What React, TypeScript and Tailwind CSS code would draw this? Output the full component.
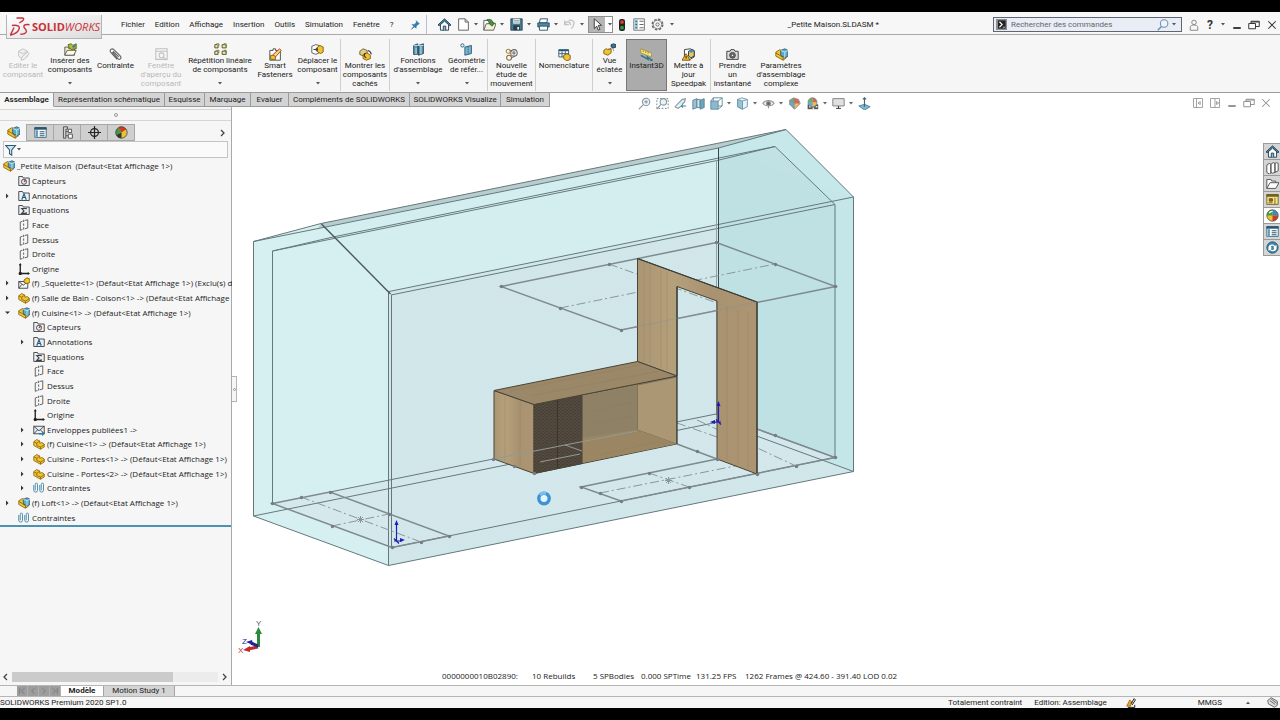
import React from "react";

const Y = "#f2c230";
const K = "#3d4246";

/* 16 x 16 glyphs used by the toolbars and the feature tree */
const glyphs: Record<string, React.ReactNode> = {
  part: (
    <g stroke="#7d5d08" strokeWidth="1">
      <path d="M1 5l4-3 4 2v3l3-1 3 2v4l-5 3-9-5z" fill={Y} />
      <path d="M1 5l4 2v3l5 2 5-3M10 12v3M5 7l4-3" fill="none" />
    </g>
  ),
  asm: (
    <g strokeWidth="1">
      <path d="M1 5l5-3 2 1v6l6 3-4 3-9-5z" fill={Y} stroke="#7d5d08" />
      <path d="M7 3l5-2 4 2v7l-4 2-5-3z" fill="#5ba9c9" stroke="#23526a" />
      <path d="M7 3l5 2 4-2M12 5v7" fill="none" stroke="#d8eef6" />
      <path d="M1 6l5 3 4 3v3" fill="none" stroke="#7d5d08" />
    </g>
  ),
  capteurs: (
    <g fill="none" stroke={K} strokeWidth="1.2">
      <path d="M1 14V2h5l1 2h8v10z" fill="#eceeef" />
      <circle cx="8" cy="9" r="3.4" />
      <path d="M8 9l2-2" stroke="#c22" strokeWidth="2" />
    </g>
  ),
  annot: (
    <g fill="none" stroke={K} strokeWidth="1.2">
      <path d="M1 14V2h5l1 2h8v10z" fill="#eceeef" />
      <path d="M5 13l3-8 3 8M6 10h4" stroke="#1d5f8a" strokeWidth="1.5" />
    </g>
  ),
  equa: (
    <g fill="none" stroke={K} strokeWidth="1.2">
      <path d="M1 14V2h5l1 2h8v10z" fill="#eceeef" />
      <path d="M11 7V6H5l3 3.200L5 12.500h6v-1.500" strokeWidth="1.500" />
    </g>
  ),
  plane: (
    <g fill="none" stroke="#555" strokeWidth="1.2">
      <path d="M6 3L3 4v11l3-1M9 2l4-1v11l-4 1" />
      <path d="M7.500 1v15" strokeDasharray="3 2" />
    </g>
  ),
  origin: (
    <g stroke="#222" strokeWidth="1.8" fill="#222">
      <path d="M3 2v12h11" fill="none" />
      <path d="M3 0l2 3H1zM16 14l-3-2v4z" strokeWidth="0" />
      <circle cx="3" cy="14" r="1.300" />
    </g>
  ),
  squel: (
    <g stroke={K} strokeWidth="1.2" fill="#f4f4f4">
      <path d="M1 6h12v9H1z" />
      <path d="M1 6l6 5 6-5M1 15l4-5" fill="none" />
      <path d="M8 4l4-3 4 2v4l-4 2-4-2z" fill={Y} stroke="#7d5d08" />
    </g>
  ),
  env: (
    <g stroke={K} strokeWidth="1.2" fill="#e8eef2">
      <path d="M1 3h14v10H1z" />
      <path d="M1 3l7 6 7-6M1 13l5-5M15 13l-5-5" fill="none" />
      <path d="M8 12h4v-2l4 3-4 3v-2H8z" fill="#2f7ea8" stroke="none" />
    </g>
  ),
  mates: (
    <g fill="none" stroke="#4f8eae" strokeWidth="1.3">
      <path d="M1 4v7a2.500 2.500 0 0 0 5 0V3a1.500 1.500 0 0 0-3 0v8M9 4v7a2.500 2.500 0 0 0 5 0V3a1.500 1.500 0 0 0-3 0v8" />
    </g>
  ),
  list: (
    <g stroke="#2b5873" strokeWidth="1">
      <path d="M1 2h14v12H1z" fill="#fff" />
      <path d="M1 2h14v2H1z" fill="#2b5873" />
      <path d="M2 5h3v9H2z" fill="#77b2cf" stroke="none" />
      <path d="M3 7h1M3 9.500h1M3 12h1M7 7h6M7 9.500h6M7 12h6" strokeWidth="1.300" />
    </g>
  ),
  props: (
    <g fill="none" strokeWidth="1.200">
      <path d="M1 1h13v14H1z" fill="#fff" stroke="#777" />
      <path d="M2 2h4v12H2z" fill="#9cc3d6" stroke="none" />
      <path d="M3 4h2M3 8h2M3 12h2" stroke="#2b5873" />
      <path d="M8 4h5M8 8h5M8 12h5" stroke="#666" />
    </g>
  ),
  config: (
    <g fill="none" stroke="#555" strokeWidth="1.2">
      <path d="M3 1h5v3H6v11H3zM6 7h3M6 12h3" />
      <path d="M9 4h4v4H9zM9 10h5v5H9z" fill="#fff" />
    </g>
  ),
  target: (
    <g fill="none" stroke="#222" strokeWidth="1.500">
      <circle cx="8" cy="8" r="4.800" />
      <path d="M8 0v16M0 8h16" />
    </g>
  ),
  ball: (
    <g>
      <circle cx="8" cy="8" r="7" fill="#e8c52f" />
      <path d="M8 8V1a7 7 0 0 1 7 7z" fill="#2f8fd0" />
      <path d="M8 8V1a7 7 0 0 0-7 7z" fill="#3f9e48" />
      <path d="M8 8h7a7 7 0 0 1-7 7z" fill="#cf3b2b" />
      <circle cx="8" cy="8" r="7" fill="none" stroke="#555" strokeWidth="1" />
      <path d="M4 5a5 5 0 0 1 4-2" stroke="#fff" fill="none" strokeWidth="1.500" />
    </g>
  ),
  manager: (
    <g>
      <circle cx="8" cy="8" r="7" fill="#e8c52f" />
      <path d="M8 8L4 2a7 7 0 0 0-2.500 9z" fill="#3f9e48" />
      <path d="M8 8L4 2a7 7 0 0 1 10 2z" fill="#cf3b2b" />
      <path d="M8 8l-6.500 3A7 7 0 0 0 8 15z" fill="#333" />
      <circle cx="8" cy="8" r="7" fill="none" stroke="#444" strokeWidth="1" />
    </g>
  ),
  appearance: (
    <g>
      <path d="M7 1l6 2 2 5-7 7-6-6V4z" fill="#d0574a" />
      <path d="M8 8l7 0-7 7z" fill="#e5ba4a" />
      <path d="M8 8L2 4v5l6 6z" fill="#58a0c0" />
      <path d="M8 8L2 4l5-3z" fill="#58a565" />
      <path d="M7 1l6 2 2 5-7 7-6-6V4z" fill="none" stroke="#888" />
    </g>
  ),
  scene: (
    <g>
      <path d="M2 9h13v6H2z" fill="#444" />
      <path d="M4 11h2v2H4zM8 13h2v2H8zM12 11h2v2h-2z" fill="#eee" />
      <circle cx="8" cy="6.500" r="5.500" fill="#e5ba4a" />
      <path d="M8 6.500V1a5.500 5.500 0 0 1 5.500 5.500z" fill="#d0574a" />
      <path d="M8 6.500V1a5.500 5.500 0 0 0-5.500 5.500z" fill="#58a565" />
      <path d="M8 6.500H2.500A5.500 5.500 0 0 0 8 12z" fill="#4ea6bb" />
      <circle cx="8" cy="6.500" r="5.500" fill="none" stroke="#777" />
    </g>
  ),
  funnel: (
    <path d="M1 2h13L9 8v7l-3-2V8z" fill="#cfe3ee" stroke="#2b5873" strokeWidth="1.400" />
  ),
  home: (
    <g stroke="#2a4756" strokeWidth="1.200">
      <path d="M3 8v7h10V8L8 3z" fill="#fff" />
      <path d="M0 8.500L8 1l8 7.500-1.500 1L8 3.800 1.500 9.500z" fill="#4a8aa6" />
      <path d="M6.500 15v-5h3v5" fill="#8fb9cb" />
    </g>
  ),
  doc: (
    <path d="M2 1h8l4 4v10H2zM10 1v4h4" fill="#fff" stroke="#666" strokeWidth="1.200" />
  ),
  open: (
    <g stroke="#555" strokeWidth="1.100">
      <path d="M1 15V3h5l1 2h5v3" fill="#fff" />
      <path d="M1 15L4 7h12l-3 8z" fill="#f5f1da" />
      <path d="M5 2c5-1 7 1 7 4h2l-3 4-4-4h2c0-2-1-3-4-3z" fill="#4f9a3e" stroke="#2c6522" />
    </g>
  ),
  save: (
    <g>
      <path d="M1 1h14v14H1z" fill="#49798f" stroke="#233e4c" />
      <path d="M4 1h8v6H4z" fill="#e6eef2" />
      <path d="M4 9h8v6H4z" fill="#24404e" />
      <path d="M5 3h6M5 5h6" stroke="#899" />
      <path d="M9 11h2v3H9z" fill="#fff" />
    </g>
  ),
  print: (
    <g stroke="#274b5e" strokeWidth="1.100">
      <path d="M4 1h9l-1 5H3z" fill="#fff" />
      <path d="M1 6h14v5H1z" fill="#4d8ba8" />
      <path d="M3 10h10v5H3z" fill="#fff" />
    </g>
  ),
  undo: (
    <path d="M2 3v5h5M2 7c3-4 8-3 7 2M7 3c4-1 8 1 6 5 0 2-1 4-3 5" fill="none" stroke="#c3c3c3" strokeWidth="1.600" />
  ),
  cursor: (
    <path d="M4 1v12l3-3 2 5 2-1-2-5h4z" fill="#fff" stroke="#333" strokeWidth="1.100" />
  ),
  light: (
    <g>
      <rect x="4" y="0" width="8" height="16" rx="3" fill="#222" />
      <circle cx="8" cy="4" r="2.500" fill="#e23a2e" />
      <circle cx="8" cy="11.500" r="2.500" fill="#2f9a3d" />
    </g>
  ),
  gear: (
    <g fill="none" stroke="#666">
      <circle cx="8" cy="8" r="6.500" strokeWidth="1.600" strokeDasharray="3.100 2" />
      <circle cx="8" cy="8" r="5.200" strokeWidth="1" />
      <circle cx="8" cy="8" r="2" strokeWidth="1.100" />
    </g>
  ),
  pin: (
    <path d="M10 1l5 5-2 1-3 3v3l-3-2-5 4 4-5-3-3h4l3-3z" fill="#2f7fb0" stroke="#1f5d85" strokeWidth=".600" />
  ),
  edit: (
    <g fill="#f0f0f0" stroke="#c4c4c4" strokeWidth="1.200">
      <path d="M2 4l5-3 6 3v6l-6 4-5-4z" />
      <path d="M6 11l7-6 2 2-6 7-4 1zM2 4l5 3 6-3" />
    </g>
  ),
  insert: (
    <g strokeWidth="1.100">
      <path d="M1 15V5h4l1 2h7v8z" fill="#f3eec4" stroke="#555" />
      <path d="M1 15l3-6h11l-3 6z" fill="#fffbe0" stroke="#555" />
      <path d="M5 2l4-1 2 2 4-2v6l-6 1-3-3z" fill="#b3bf2c" stroke="#55600f" />
      <path d="M10 4l4-2v3l-3 1z" fill="#3e7fa5" />
    </g>
  ),
  clip: (
    <path d="M4 5l7 8c2 2 5 0 3-3L6 2C4 0 0 2 2 5l8 9M5 4l7 7" fill="none" stroke="#666" strokeWidth="1.400" />
  ),
  preview: (
    <g fill="none" stroke="#c0c0c0" strokeWidth="1.300">
      <path d="M1 1h14v13H1zM1 4h14" />
      <circle cx="8" cy="9" r="3" />
      <path d="M10 11l4 4" />
    </g>
  ),
  pattern: (
    <g stroke="#54481d" strokeWidth="1.100">
      <path d="M1 2h3l1 1v3H1zM10 2h3l2 1v3h-5zM1 10h3l1 1v3H1zM10 10h3l2 1v3h-5z" fill="#f3e6a8" />
      <path d="M3 1h3v3M12 1h3v3M3 9h3v3M12 9h3v3" fill="none" stroke="#4c7f2e" />
    </g>
  ),
  smart: (
    <g strokeWidth="1.100">
      <path d="M1 3h4V1h3v2h6v12H1z" fill="#fff" stroke="#444" />
      <path d="M2 9h6v5H2z" fill={Y} stroke="#7d5d08" />
      <path d="M5 8l8-7 2 2-7 8z" fill="#f6d86d" stroke="#a33" />
    </g>
  ),
  move: (
    <g strokeWidth="1.100">
      <path d="M1 4l5-2 4 1v9l-4 2-5-2z" fill="#fff" stroke="#555" />
      <path d="M8 5l3-2 4 2v6l-3 2-4-2z" fill={Y} stroke="#7d5d08" />
      <path d="M3 8h5M6 6l2 2-2 2" stroke="#444" fill="none" strokeWidth="1.300" />
    </g>
  ),
  show: (
    <g strokeWidth="1.100">
      <path d="M1 4l4-3 5 2v5l-4 2-5-2z" fill="#e2cf8c" stroke="#6b5a22" />
      <path d="M5 8l5-2 4 3v4l-5 2-4-2z" fill={Y} stroke="#7d5d08" />
      <path d="M11 3c3 1 4 3 4 5M8 6c-2 2-2 5 1 6" fill="none" stroke="#333" strokeWidth="1.300" />
    </g>
  ),
  features: (
    <g strokeWidth="1.100">
      <path d="M2 3l5-2v13H2zM8 3l6-2v12l-6 2z" fill="#5a93b0" stroke="#24475a" />
      <path d="M2 3h12M5 6v8M11 4v10" stroke="#cfe5ee" fill="none" />
    </g>
  ),
  geom: (
    <g strokeWidth="1.200">
      <path d="M6 5l8-2v10l-8 2z" fill="#7fb6cf" stroke="#2b6280" />
      <circle cx="3" cy="3" r="2" fill="none" stroke="#2b6280" />
      <path d="M10 4v10" stroke="#2b6280" strokeDasharray="2 1" />
    </g>
  ),
  study: (
    <g fill="none" strokeWidth="1.300">
      <circle cx="11" cy="6" r="4" stroke="#666" />
      <circle cx="11" cy="6" r="1.300" stroke="#666" />
      <circle cx="4" cy="4" r="2.500" stroke="#a58a3a" />
      <circle cx="5" cy="12" r="3" stroke="#8a6b3a" />
      <path d="M6 3l3 1M8 12l4-2" stroke="#666" />
    </g>
  ),
  bom: (
    <g strokeWidth="1.100">
      <path d="M1 2h12v9H1z" fill="#fff" stroke="#2b5873" />
      <path d="M1 2h12v2H1z" fill="#2b5873" />
      <path d="M1 7h12M5 4v7M9 4v7" stroke="#2b5873" fill="none" />
      <path d="M7 9l4-2 4 2v5l-4 2-4-3z" fill={Y} stroke="#7d5d08" />
    </g>
  ),
  explode: (
    <g strokeWidth="1.100">
      <path d="M1 9l3-2 2 1 4-1v5l-4 3-5-2z" fill={Y} stroke="#7d5d08" />
      <path d="M10 2l3-1 3 1v3l-3 1-3-1z" fill="#3e6f8c" stroke="#1f4054" />
      <path d="M7 7h6v3" stroke="#666" fill="none" strokeDasharray="1 1" />
    </g>
  ),
  instant: (
    <g>
      <path d="M1 1l13 5v5L1 6z" fill="#f7e58a" stroke="#a8902a" />
      <path d="M4 3v2M7 4v2M10 5v2" stroke="#806c1a" />
      <path d="M1 9l9 5-1-3 6 4-3 1" fill="none" stroke="#2b6f9a" strokeWidth="1.600" />
    </g>
  ),
  speedpak: (
    <g strokeWidth="1.100">
      <path d="M3 2l7-1 5 2v8l-5 3-7-2z" fill="#fff" stroke="#333" />
      <path d="M8 4l4-2 3 2v6l-4 2-3-2z" fill="#e9c95a" stroke="#234" />
      <path d="M8 4l4-2 3 2-4 2z" fill="#4f93b8" />
      <path d="M5 7l5 8H0z" fill={Y} stroke="#7d4d08" />
      <path d="M5 10v3" stroke="#000" />
    </g>
  ),
  camera: (
    <g stroke="#444" strokeWidth="1.200" fill="#ddd">
      <path d="M1 4h4l1-2h4l1 2h4v10H1z" />
      <circle cx="8" cy="9" r="3.500" fill="#777" />
      <circle cx="8" cy="9" r="1.500" fill="#fff" />
    </g>
  ),
  zoomfit: (
    <g fill="none" stroke="#7c8b93" strokeWidth="1.300">
      <circle cx="10" cy="6" r="4.500" fill="#e6f1f6" />
      <path d="M7 9l-6 6M8 6h4M10 4v4" />
    </g>
  ),
  zoomarea: (
    <g fill="none" stroke="#7c8b93" strokeWidth="1.300">
      <path d="M1 2h14v12H1z" strokeDasharray="2 2" />
      <circle cx="9" cy="6" r="4" fill="#e6f1f6" />
      <path d="M6 9l-5 6" />
    </g>
  ),
  prev: (
    <g fill="none" stroke="#6f8894" strokeWidth="1.300">
      <path d="M1 12l9-9 4-1-1 4-3 3M1 12l4 2 4-3" fill="#dcebf1" />
      <path d="M9 11h6M11 9l-2 2 2 2" stroke="#2e7da3" />
    </g>
  ),
  section: (
    <g stroke="#3f6f88" strokeWidth="1">
      <path d="M1 4l5-2v11l-5 2z" fill="#8dbbd0" />
      <path d="M6 3h4v10H6z" fill="#cdd" />
      <path d="M10 4l5-2v11l-5 2z" fill="#5e9ab8" />
    </g>
  ),
  orient: (
    <g stroke="#4f7c92" strokeWidth="1.100">
      <path d="M4 1h11v10H4z" fill="#fff" />
      <path d="M1 5h9v10H1z" fill="#7fb3cb" />
      <path d="M1 5l3-4M10 5l5-4M10 15l5-4" fill="none" />
    </g>
  ),
  cube: (
    <g stroke="#5c8ba2" strokeWidth="1.100">
      <path d="M2 3l5-2 7 2v9l-6 3-6-3z" fill="#e6f2f7" />
      <path d="M2 3l6 2v10l-6-3z" fill="#8dbdd2" />
      <path d="M8 5l6-2" />
    </g>
  ),
  eye: (
    <g fill="none" stroke="#8a8a8a" strokeWidth="1.300">
      <path d="M1 8c3-5 11-5 14 0-3 4-11 4-14 0z" fill="#eee" />
      <circle cx="8" cy="8" r="2.500" fill="#555" />
      <path d="M8 10v4" />
    </g>
  ),
  monitor: (
    <g stroke="#777" strokeWidth="1.200" fill="#ddd">
      <path d="M1 2h14v9H1z" />
      <path d="M8 11v3M5 14h6" stroke="#222" />
    </g>
  ),
  normal: (
    <g>
      <path d="M1 11l7-2 7 3-7 4z" fill="#6fb0cc" stroke="#336f8c" />
      <path d="M8 12V1M6 3l2-2 2 2" stroke="#356" strokeWidth="1.400" fill="none" />
    </g>
  ),
  books: (
    <g fill="#fff" stroke="#555" strokeWidth="1.200">
      <path d="M1 5l3-2 2 1v11l-2 1-3-2zM6 4l3-2 2 1v11l-3 1-2-1zM11 3l2-1 2 1v9l-4 2z" />
    </g>
  ),
  folder: (
    <path d="M1 14V3h5l1 2h5v2M1 14l4-7h11l-4 7z" fill="#fff" stroke="#555" strokeWidth="1.200" />
  ),
  palette: (
    <g stroke="#6a5618" strokeWidth="1">
      <path d="M1 2h14v12H1z" fill="#f6e08c" />
      <path d="M1 2h14v2H1zM4 7h4v3H4zM11 6v8" fill="#7d6a25" />
      <path d="M3 12h5" />
    </g>
  ),
  globe: (
    <g>
      <circle cx="8" cy="8" r="7" fill="#3f82a8" stroke="#25526d" />
      <path d="M3 8c0-4 6-5 8-2l2-1v4H9l1-2c-2-2-4-1-4 1zM13 9c0 4-6 5-8 2l-2 1V8h4l-1 2c2 2 4 1 4-1z" fill="#fff" />
    </g>
  ),
  user: (
    <g fill="none" stroke="#888" strokeWidth="1.300">
      <circle cx="8" cy="4.500" r="3" />
      <path d="M3 15V11c0-4 10-4 10 0v4z" />
    </g>
  ),
  mag: (
    <g fill="none" stroke="#6d8fb0" strokeWidth="1.400">
      <circle cx="9.500" cy="6" r="5" fill="#eef4fa" />
      <path d="M6 10l-5 5" strokeWidth="2" />
    </g>
  ),
  prompt: (
    <g>
      <path d="M0 0h16v16H0z" fill="#8b8f93" />
      <path d="M3 2h11v12H3z" fill="#222" />
      <path d="M5 4l4 4-4 4" fill="none" stroke="#fff" strokeWidth="1.600" />
      <path d="M10 12h3" stroke="#fff" />
    </g>
  ),
  min: <path d="M3 12h10" stroke="currentColor" strokeWidth="2.500" />,
  restore: (
    <path d="M1 6h9v7H1zM4 6V3h11v7h-5M4 4h11" fill="none" stroke="currentColor" strokeWidth="1.300" />
  ),
  close: <path d="M3 3l10 10M13 3L3 13" stroke="currentColor" strokeWidth="1.400" />,
  paneL: (
    <path d="M2 2h12v12H2zM6 2v12M11 6L8 8l3 2z" fill="none" stroke="currentColor" strokeWidth="1.100" />
  ),
  paneR: (
    <path d="M2 2h12v12H2zM8 2v12M10 6l3 2-3 2z" fill="none" stroke="currentColor" strokeWidth="1.100" />
  ),
  unit: (
    <g>
      <path d="M1 13l5-10 4 4-3 6z" fill="#e8a524" stroke="#7a5410" />
      <path d="M8 9l5-8 2 2-5 8M3 15h11v-4" fill="none" stroke="#222" strokeWidth="1.600" />
    </g>
  ),
  tag: (
    <g fill="#ddd" stroke="#555" strokeWidth="1.200">
      <path d="M1 5l5-4 9 5v6l-4 3L2 10z" />
      <path d="M4 5l8 6M6 3l8 6" />
    </g>
  ),
};

function Icon({ name, className = "size-3" }: { name: string; className?: string }) {
  return (
    <svg viewBox="0 0 16 16" className={`shrink-0 ${className}`} aria-hidden="true">
      {glyphs[name]}
    </svg>
  );
}

function Caret() {
  return (
    <svg viewBox="0 0 4 3" className="h-[3px] w-1 shrink-0" aria-hidden="true">
      <path d="M0 0h4L2 2.500z" fill="#555" />
    </svg>
  );
}

function Logo() {
  return (
    <a
      href="#"
      aria-label="SOLIDWORKS"
      className="relative z-10 flex h-6 w-24 shrink-0 items-center self-start border border-t-0 border-[#b5b5b5] bg-linear-to-br from-white to-[#dcdcdc] pl-[3px] text-[#c8313b]"
    >
      <svg viewBox="0 0 56 54" className="h-[19px] w-5 shrink-0" fill="none" stroke="currentColor" strokeWidth="4">
        <path d="M18 3h17c5 0 4 5 0 8l-9 6" />
        <path d="M5 24c15-2 24 1 20 11-3 8-12 14-24 16l10-21" />
        <path d="M55 22c-10-2-17 0-16 6 1 5 9 8 7 14-2 5-9 7-17 7" />
      </svg>
      <span className="pl-0.5 font-['Open_Sans','Noto_Sans',sans-serif] text-[11px]">
        <b>SOLID</b>
        <i>WORKS</i>
      </span>
    </a>
  );
}

const menus = ["Fichier", "Edition", "Affichage", "Insertion", "Outils", "Simulation", "Fenêtre", "?"];

const quick: { icon: string; label: string; width: string; caret?: boolean }[] = [
  { icon: "home", label: "Accueil", width: "w-[19px]" },
  { icon: "doc", label: "Nouveau", width: "w-[26px]", caret: true },
  { icon: "open", label: "Ouvrir", width: "w-[27px]", caret: true },
  { icon: "save", label: "Enregistrer", width: "w-[27px]", caret: true },
  { icon: "print", label: "Imprimer", width: "w-[26px]", caret: true },
  { icon: "undo", label: "Annuler", width: "w-[25px]", caret: true },
];

function TitleBar() {
  return (
    <header className="flex h-[23px] shrink-0 items-center border-b border-[#a9a9a9] bg-[#f7f7f7] pt-[3px] pl-[6px]">
      <Logo />
      <nav className="flex items-center gap-2.5 pl-[19px]">
        {menus.map((m) => (
          <button key={m} className="whitespace-nowrap">{m}</button>
        ))}
      </nav>
      <button aria-label="Épingler le menu" className="ml-4">
        <Icon name="pin" className="size-2.5" />
      </button>
      <div className="ml-1.5 h-full w-px bg-[#b9c2c8]" />
      <div className="flex items-center pl-[11px]">
        {quick.map((q) => (
          <button key={q.label} aria-label={q.label} className={`flex items-center gap-1 ${q.width}`}>
            <Icon name={q.icon} className="size-[13px]" />
            {q.caret && <Caret />}
          </button>
        ))}
        <button aria-label="Sélectionner" className="flex h-[17px] w-[25px] items-center border border-[#8e8e8e] bg-linear-to-r from-[#b5b5b5] from-70% to-white to-70% pl-0.5">
          <Icon name="cursor" className="size-[13px]" />
          <span className="pl-1"><Caret /></span>
        </button>
        <button aria-label="Reconstruire" className="pl-[3px]"><Icon name="light" /></button>
        <button aria-label="Propriétés" className="pl-[5px]"><Icon name="props" className="size-[13px]" /></button>
        <button aria-label="Options" className="flex items-center gap-1.5 pl-[5px]">
          <Icon name="gear" className="size-[13px]" />
          <Caret />
        </button>
      </div>
      <h1 className="flex-1 pl-[29px] text-center font-normal">_Petite Maison.SLDASM *</h1>
      <div className="ml-[29px] flex h-[15px] w-[189px] items-center border border-[#5f6670] bg-[#e9edf5] px-0.5">
        <Icon name="prompt" className="size-[11px]" />
        <input
          aria-label="Rechercher des commandes"
          placeholder="Rechercher des commandes"
          className="w-0 flex-1 bg-transparent pl-1 outline-none placeholder:text-[#666]"
        />
        <Icon name="mag" className="size-3" />
        <span className="px-[3px]"><Caret /></span>
      </div>
      <div className="flex items-center pr-0.5 pl-1.5 text-[#333]">
        <button aria-label="Connexion"><Icon name="user" /></button>
        <button aria-label="Aide" className="flex w-[27px] items-center gap-2 pl-[7px]">
          <b className="text-[12px]">?</b>
          <Caret />
        </button>
        <button aria-label="Réduire" className="pl-1"><Icon name="min" /></button>
        <button aria-label="Restaurer" className="pl-[5px]"><Icon name="restore" /></button>
        <button aria-label="Fermer" className="pl-1.5"><Icon name="close" /></button>
      </div>
    </header>
  );
}

type Tool = { icon: string; lines: string[]; width: string; menu?: boolean; off?: boolean; on?: boolean; sep?: boolean };

const tools: Tool[] = [
  { icon: "edit", lines: ["Editer le", "composant"], width: "w-[46px]", off: true },
  { icon: "insert", lines: ["Insérer des", "composants"], width: "w-12", menu: true },
  { icon: "clip", lines: ["Contrainte"], width: "w-[43px]" },
  { icon: "preview", lines: ["Fenêtre", "d'aperçu du", "composant"], width: "w-12", off: true },
  { icon: "pattern", lines: ["Répétition linéaire", "de composants"], width: "w-[70px]", menu: true },
  { icon: "smart", lines: ["Smart", "Fasteners"], width: "w-10" },
  { icon: "move", lines: ["Déplacer le", "composant"], width: "w-[46px]", menu: true, sep: true },
  { icon: "show", lines: ["Montrer les", "composants", "cachés"], width: "w-[49px]", sep: true },
  { icon: "features", lines: ["Fonctions", "d'assemblage"], width: "w-14", menu: true },
  { icon: "geom", lines: ["Géométrie", "de référ..."], width: "w-[42px]", menu: true, sep: true },
  { icon: "study", lines: ["Nouvelle", "étude de", "mouvement"], width: "w-12", sep: true },
  { icon: "bom", lines: ["Nomenclature"], width: "w-[57px]", sep: true },
  { icon: "explode", lines: ["Vue", "éclatée"], width: "w-[33px]", menu: true },
  { icon: "instant", lines: ["Instant3D"], width: "w-[41px]", on: true },
  { icon: "speedpak", lines: ["Mettre à", "jour", "Speedpak"], width: "w-11", sep: true },
  { icon: "camera", lines: ["Prendre", "un", "instantané"], width: "w-[43px]" },
  { icon: "asm", lines: ["Paramètres", "d'assemblage", "complexe"], width: "w-[54px]" },
];

function Ribbon() {
  return (
    <div className="flex h-[58px] shrink-0 border-b border-[#9b9b9b] bg-[#f6f6f6] pt-1">
      {tools.map((t) => (
        <div key={t.lines.join(" ")} className={`flex h-[52px] shrink-0 ${t.width} ${t.sep ? "border-r border-[#cfcfcf]" : ""}`}>
          <button
            disabled={t.off}
            className={`flex w-full flex-col items-center leading-[9px] whitespace-nowrap ${t.menu ? "pt-1" : "pt-[9px]"} ${t.off ? "text-[#b9b9b9]" : ""} ${t.on ? "bg-[#ababab] outline-1 -outline-offset-1 outline-[#777]" : ""}`}
          >
            <Icon name={t.icon} className="size-[13px]" />
            {t.lines.map((l) => (
              <span key={l}>{l}</span>
            ))}
            {t.menu && <span className="pt-2"><Caret /></span>}
          </button>
        </div>
      ))}
    </div>
  );
}

const tabs: [string, string][] = [
  ["Assemblage", "w-[54px]"],
  ["Représentation schématique", "w-[111px]"],
  ["Esquisse", "w-10"],
  ["Marquage", "w-[46px]"],
  ["Evaluer", "w-[38px]"],
  ["Compléments de SOLIDWORKS", "w-[121px]"],
  ["SOLIDWORKS Visualize", "w-[91px]"],
  ["Simulation", "w-[49px]"],
];

const views: [string, string, boolean][] = [
  ["zoomfit", "Zoom au mieux", false],
  ["zoomarea", "Zoom fenêtre", false],
  ["prev", "Vue précédente", false],
  ["section", "Vue en coupe", false],
  ["orient", "Orientation", true],
  ["cube", "Style d'affichage", true],
  ["eye", "Cacher/Montrer", true],
  ["appearance", "Apparence", false],
  ["scene", "Scène", true],
  ["monitor", "Paramètres de vue", true],
  ["normal", "Normal à", false],
];

function TabRow() {
  return (
    <div className="relative z-10 flex h-[14px] shrink-0 bg-white">
      {tabs.map(([t, w], i) => (
        <button
          key={t}
          className={`shrink-0 border-r border-b border-[#9a9a9a] pt-px text-center whitespace-nowrap ${w} ${i === 0 ? "border-b-transparent bg-[#f6f6f6] font-semibold" : "bg-[#d4d4d4]"}`}
        >
          {t}
        </button>
      ))}
      <div className="absolute top-1 right-1 left-[232px] flex items-center justify-center gap-[5px] opacity-90">
        {views.map(([icon, label, caret]) => (
          <button key={label} aria-label={label} className="flex items-center gap-1">
            <Icon name={icon} className="size-[13px]" />
            {caret && <Caret />}
          </button>
        ))}
      </div>
      <div className="absolute top-1 right-2 flex items-center gap-[5px] text-[#909090]">
        {["paneL", "paneR", "min", "restore", "close"].map((n) => (
          <button key={n} aria-label={n}><Icon name={n} className="size-3" /></button>
        ))}
      </div>
    </div>
  );
}

type Node = { icon: string; text: string; level: number; arrow?: "closed" | "open" };
const cfg = "(Défaut<Etat Affichage 1>)";
const nodes: Node[] = [
  { icon: "asm", text: `_Petite Maison  ${cfg}`, level: 0 },
  { icon: "capteurs", text: "Capteurs", level: 1 },
  { icon: "annot", text: "Annotations", level: 1, arrow: "closed" },
  { icon: "equa", text: "Equations", level: 1 },
  { icon: "plane", text: "Face", level: 1 },
  { icon: "plane", text: "Dessus", level: 1 },
  { icon: "plane", text: "Droite", level: 1 },
  { icon: "origin", text: "Origine", level: 1 },
  { icon: "squel", text: `(f) _Squelette<1> ${cfg} (Exclu(s) d`, level: 1, arrow: "closed" },
  { icon: "part", text: "(f) Salle de Bain - Coison<1> -> (Défaut<Etat Affichage", level: 1, arrow: "closed" },
  { icon: "asm", text: `(f) Cuisine<1> -> ${cfg}`, level: 1, arrow: "open" },
  { icon: "capteurs", text: "Capteurs", level: 2 },
  { icon: "annot", text: "Annotations", level: 2, arrow: "closed" },
  { icon: "equa", text: "Equations", level: 2 },
  { icon: "plane", text: "Face", level: 2 },
  { icon: "plane", text: "Dessus", level: 2 },
  { icon: "plane", text: "Droite", level: 2 },
  { icon: "origin", text: "Origine", level: 2 },
  { icon: "env", text: "Enveloppes publiées1 ->", level: 2, arrow: "closed" },
  { icon: "part", text: `(f) Cuisine<1> -> ${cfg}`, level: 2, arrow: "closed" },
  { icon: "part", text: `Cuisine - Portes<1> -> ${cfg}`, level: 2, arrow: "closed" },
  { icon: "part", text: `Cuisine - Portes<2> -> ${cfg}`, level: 2, arrow: "closed" },
  { icon: "mates", text: "Contraintes", level: 2, arrow: "closed" },
  { icon: "asm", text: `(f) Loft<1> -> ${cfg}`, level: 1, arrow: "closed" },
  { icon: "mates", text: "Contraintes", level: 1 },
];

const indent = ["pl-[3px]", "pl-[5px]", "pl-5"];

function Tree() {
  return (
    <ul className="grid h-[368px] shrink-0 auto-rows-fr border-b-2 border-[#4b93b5] font-['Open_Sans','Noto_Sans',sans-serif]">
      {nodes.map((n, i) => (
        <li key={i} className={`flex items-center whitespace-pre ${indent[n.level]}`}>
          {n.level > 0 && (
            <svg viewBox="0 0 13 6" className="h-1.5 w-[13px] shrink-0" aria-hidden="true">
              {n.arrow === "closed" && <path d="M1 .500l2.500 2.500L1 5.500z" fill="#333" />}
              {n.arrow === "open" && <path d="M0 1.500h5L2.500 4z" fill="#333" />}
            </svg>
          )}
          <Icon name={n.icon} />
          <span className="pl-0.5">{n.text}</span>
        </li>
      ))}
    </ul>
  );
}

function Panel() {
  return (
    <aside className="flex w-[232px] shrink-0 flex-col border-r border-[#a9a9a9] bg-[#f6f6f6]">
      <div className="mt-0.5 flex h-3 shrink-0 items-center justify-center border-y border-[#d6d6d6]">
        <i className="size-1 rounded-full border border-[#999]" />
      </div>
      <div className="mt-[3px] flex h-[17px] shrink-0 items-stretch">
        {["asm", "list", "config", "target", "manager"].map((n, i) => (
          <button
            key={n}
            aria-label={n}
            className={`flex w-[27px] items-center justify-center border-r border-[#a8a8a8] ${i ? "border-y bg-[#cfcfcf]" : ""}`}
          >
            <Icon name={n} className="size-[13px]" />
          </button>
        ))}
        <button aria-label="Développer" className="ml-auto pr-[5px]">
          <svg viewBox="0 0 6 8" className="h-2 w-1.5"><path d="M1 1l3 3-3 3" fill="none" stroke="#444" strokeWidth="1.300" /></svg>
        </button>
      </div>
      <button aria-label="Filtre" className="mx-[3px] flex h-[17px] shrink-0 items-center border border-[#c4c4c4] bg-[#fafafa] pl-px">
        <Icon name="funnel" />
        <Caret />
      </button>
      <div className="h-px shrink-0" />
      <Tree />
      <div className="mt-auto mb-[3px] flex h-[10px] items-center text-[#444]">
        <svg viewBox="0 0 12 10" className="h-2.5 w-3"><path d="M7 2L4 5l3 3" fill="none" stroke="currentColor" strokeWidth="1.300" /></svg>
        <div className="flex h-full flex-1 bg-[#ececec]"><div className="w-[78%] bg-[#cbcbcb]" /></div>
        <svg viewBox="0 0 12 10" className="mr-px h-2.5 w-3"><path d="M5 2l3 3-3 3" fill="none" stroke="currentColor" strokeWidth="1.300" /></svg>
      </div>
    </aside>
  );
}

const dots = [
  [272, 503], [330, 492], [449, 536], [392, 547], [301, 497], [389, 514], [332, 526], [421, 542],
  [501, 286], [716, 242], [835, 286], [621, 330], [609, 264], [775, 264], [560, 308],
  [581, 487], [621, 501], [649, 473], [689, 487], [600, 493], [697, 451], [796, 466], [775, 435],
  [717, 459], [757, 474], [835, 457], [493, 459], [534, 473], [514, 466],
];

function Model() {
  return (
    <svg viewBox="232 107 1048 578" className="absolute inset-0 size-full" role="img" aria-label="Vue 3D de l'assemblage">
      <defs>
        <pattern id="dither" width="2" height="2" patternUnits="userSpaceOnUse">
          <path d="M0 0h1v1H0zM1 1h1v1H1z" fill="#7fb9c2" opacity=".06" />
        </pattern>
        <linearGradient id="wood" x1="0" x2="1">
          <stop offset="0" stopColor="#ab9674" />
          <stop offset=".3" stopColor="#b5a07c" />
          <stop offset=".6" stopColor="#a99270" />
          <stop offset="1" stopColor="#ad9573" />
        </linearGradient>
        <pattern id="dark" width="4" height="3" patternUnits="userSpaceOnUse">
          <path d="M0 0h4v3H0z" fill="#544b40" />
          <path d="M0 1h2M2 2.500h2" stroke="#463d34" />
        </pattern>
      </defs>

      {/* glass envelope */}
      <path d="M253.500 241.500L321 223.500 786 129.500 853.500 197V471.500L388.500 565.500 253.500 516z" fill="#d6eff1" />
      <path d="M389 292L853.500 197V471.500L388.500 565.500z" fill="#d3e8eb" />
      <path d="M718.500 148L786 129.500 853.500 197V471.500L718.500 422z" fill="#c6e8ea" />
      <path d="M718.500 160L775 146.500 835 204.500V457L718.500 414z" fill="#c0e2e4" />
      <path d="M272.500 503.500L716 414 835 457.500 392 547.500z" fill="#d5e9ed" />
      <path d="M321 223.500L786 129.500 718.500 148 318 228z" fill="#b9cdce" />
      <path d="M321 226L718 148 853 197V471L389 565V292z" fill="url(#dither)" />

      <g fill="none" stroke="#65797d" strokeWidth="1">
        <path d="M253.500 241.500L321 223.500 786 129.500 853.500 197V471.500L388.500 565.500 253.500 516z" />
        <path d="M253.500 241.500L718.500 148 786 129.500M389 291.500L853.500 197M391 295L835 204.500" />
        <path d="M272.500 503.500V251L333 237 775 146.500 835 204.500V457.500" />
        <path d="M272.500 251L717 160.500 775 146.500M388.500 291V565.500M391.500 295V547" />
        <path d="M253.500 516L718.500 422 853.500 471.500M330 492L716 414 835 457.500 392 547.500" />
        <path d="M716.500 160V414" stroke="#8fa3a7" />
        <path d="M321.500 224L390.500 294" stroke="#4a595c" strokeWidth="1.400" />
        <path d="M718.500 148V422" stroke="#39484b" />
      </g>

      {/* layout sketches */}
      <g fill="none" stroke="#7f8a90" strokeWidth="1.500">
        <path d="M272.500 503.500L330 492 449 536 392 547.500z" />
        <path d="M501 286.500L716.500 242.500 835.500 286.500 621 330z" />
        <path d="M717 459L581 487 621 501 835 457.500 757 429M677 444L717 459" />
      </g>
      <g fill="none" stroke="#8b979c" strokeWidth="1" strokeDasharray="9 3 2 3">
        <path d="M301 497L421 542M332 526L389 514M560 308L775 264M609 264L717 303" />
        <path d="M600 493L755 462M649 473L689 487M697 420L796 466M677 423L717 437" />
      </g>

      {/* kitchen unit */}
      <g stroke="#4a4436" strokeWidth="1" strokeLinejoin="round">
        <path d="M534 404.500L676.500 376V444L534 473.500z" fill="#9e8b6b" />
        <path d="M582 396L637.500 385V430L582 438z" fill="#8f8166" stroke="none" />
        <path d="M637.500 385L676.500 377V444L637.500 430z" fill="#ab9774" stroke="#7f7359" />
        <path d="M582 438L637.500 430 676.500 444 582 463z" fill="#9b8663" stroke="none" />
        <path d="M494 390.500L534 404.500V473.500L494 459z" fill="url(#wood)" />
        <path d="M534 404.500L582 395.500V463.500L534 473.500z" fill="url(#dark)" />
        <path d="M557.500 400V468" stroke="#3b342c" />
        <path d="M637.500 258.500L757 302V474L717 459V301L677 286.500V376L637.500 361.500z" fill="url(#wood)" />
        <path d="M494 390.500L637.500 361.500 677 376 534 404.500z" fill="#9b8868" />
        <path d="M637.500 258.500L757 302V474M677 286.500V444" fill="none" stroke="#3a4038" strokeWidth="1.300" />
      </g>
      <g fill="none" stroke="#927a55" opacity=".35">
        <path d="M644 262V362M650 265V363M661 270V368M667 272V370M727 306V460M738 310V464M748 312V468M505 396V461M520 401V467" />
        <path d="M510 391L640 365M530 396L660 371M590 412L637 401M590 425L637 415M600 455L660 441" />
      </g>
      <path d="M494 459L565 445 637 431M540 462L580 454M565 445l17 6" fill="none" stroke="#929a95" strokeWidth="1" />
      <path d="M621 330L757 302" stroke="#8a9096" strokeOpacity=".5" />

      <g fill="#727d84">
        {dots.map(([x, y]) => (
          <circle key={`${x}-${y}`} cx={x + 0.5} cy={y + 0.5} r="1.700" />
        ))}
      </g>
      <path d="M357 519.500h7M360.500 516v7M358 517l5 5M363 517l-5 5M665 480.500h7M668.500 477v7M666 478l5 5M671 478l-5 5" stroke="#8b959b" />

      {/* local origins */}
      <g stroke="#1d1db8" fill="#1d1db8" strokeWidth="1.200">
        <path d="M396.500 541V525M394 541h8M394 538.500l5 5M718.500 422V406M712 422h9M716 419.500l5 5" fill="none" />
        <path d="M396.500 520l2 5h-4zM405 540l-5-2v4zM718.500 401l2 5h-4zM710 422l5-2v4z" stroke="none" />
      </g>

      {/* view triad */}
      <g strokeWidth="3">
        <path d="M258.500 647V632" stroke="#2b8a3a" />
        <path d="M258.500 627l3.500 7h-7z" fill="#2b8a3a" />
        <path d="M258 647l-10 2" stroke="#c02c2c" />
        <path d="M243 650l7-4v6z" fill="#c02c2c" />
        <path d="M258 646l-7-3" stroke="#22229c" />
        <path d="M246 642l6-2 1 5z" fill="#22229c" />
      </g>
      <g fontFamily="'Liberation Sans', sans-serif" fontSize="8">
        <text x="256" y="626" fill="#555">Y</text>
        <text x="242" y="644" fill="#22229c">Z</text>
        <text x="238" y="653" fill="#b33">X</text>
      </g>

      <circle cx="544" cy="498.500" r="5.200" fill="#e6f3fa" stroke="#3d93d6" strokeWidth="3.400" />
      <path d="M540 495a5.200 5.200 0 0 1 6-1.500" fill="none" stroke="#7cc0ee" strokeWidth="3" />
    </svg>
  );
}

function Viewport() {
  return (
    <main className="relative min-w-0 flex-1 bg-white">
      <Model />
      <div className="absolute top-[269px] left-0 flex h-[26px] w-[5px] items-center justify-center border border-l-0 border-[#b5b5b5] bg-[#f6f6f6]">
        <i className="size-[3px] rounded-full border border-[#999]" />
      </div>
      <div className="absolute top-9 right-0 flex w-[17px] flex-col border-t border-l border-[#9a9a9a]">
        {["home", "books", "folder", "palette", "ball", "list", "globe"].map((n) => (
          <button
            key={n}
            aria-label={n}
            className={`flex h-4 items-center justify-center border-b border-[#9a9a9a] ${n === "ball" ? "bg-white" : "bg-[#d5d5d5]"}`}
          >
            <Icon name={n} className="size-[13px]" />
          </button>
        ))}
      </div>
      <p className="absolute bottom-1 left-[210px] flex font-['Open_Sans','Noto_Sans',sans-serif] leading-[10px] whitespace-pre">
        <span className="w-[90px]">0000000010B02890:</span>
        <span className="w-[61px]">10 Rebuilds</span>
        <span className="w-12">5 SPBodies</span>
        <span className="w-[55px]">0.000 SPTime</span>
        <span className="w-[49px]">131.25 FPS</span>
        <span>1262 Frames @ 424.60 - 391.40 LOD 0.02</span>
      </p>
    </main>
  );
}

export default function App() {
  return (
    <div className="flex min-h-screen flex-col bg-black py-3 font-[Roboto,'Noto_Sans',sans-serif] text-[8px] leading-3 text-[#222]">
      <TitleBar />
      <Ribbon />
      <TabRow />
      <div className="flex flex-1">
        <Panel />
        <Viewport />
      </div>
      <div className="flex h-3 shrink-0 border-y border-[#b5b5b5] bg-[#f6f6f6] leading-[10px]">
        <div className="ml-[17px] flex w-11 bg-[#9d9d9d] text-[#777]">
          {["M3 2v6M8 2L5 5l3 3", "M7 2L4 5l3 3", "M4 2l3 3-3 3", "M3 2l3 3-3 3M8 2v6"].map((d) => (
            <button key={d} aria-label="Onglet" className="flex-1 border-r border-[#b0b0b0]">
              <svg viewBox="0 0 11 10" className="h-2.5 w-full"><path d={d} fill="none" stroke="currentColor" /></svg>
            </button>
          ))}
        </div>
        <button className="w-[42px] bg-white text-center font-bold">Modèle</button>
        <button className="w-[72px] border-x border-[#a5a5a5] bg-[#d4d4d4] text-center">Motion Study 1</button>
      </div>
      <footer className="flex h-[11px] shrink-0 items-center bg-[#f6f6f6] leading-[11px]">
        <span>SOLIDWORKS Premium 2020 SP1.0</span>
        <span className="ml-auto">Totalement contraint</span>
        <span className="pl-3">Edition: Assemblage</span>
        <span className="pl-[19px]"><Icon name="unit" className="size-2.5" /></span>
        <span className="pl-[62px]">MMGS</span>
        <span className="rotate-180 pr-6"><Caret /></span>
        <Icon name="tag" className="mr-0.5 ml-[17px] size-[11px]" />
      </footer>
    </div>
  );
}
